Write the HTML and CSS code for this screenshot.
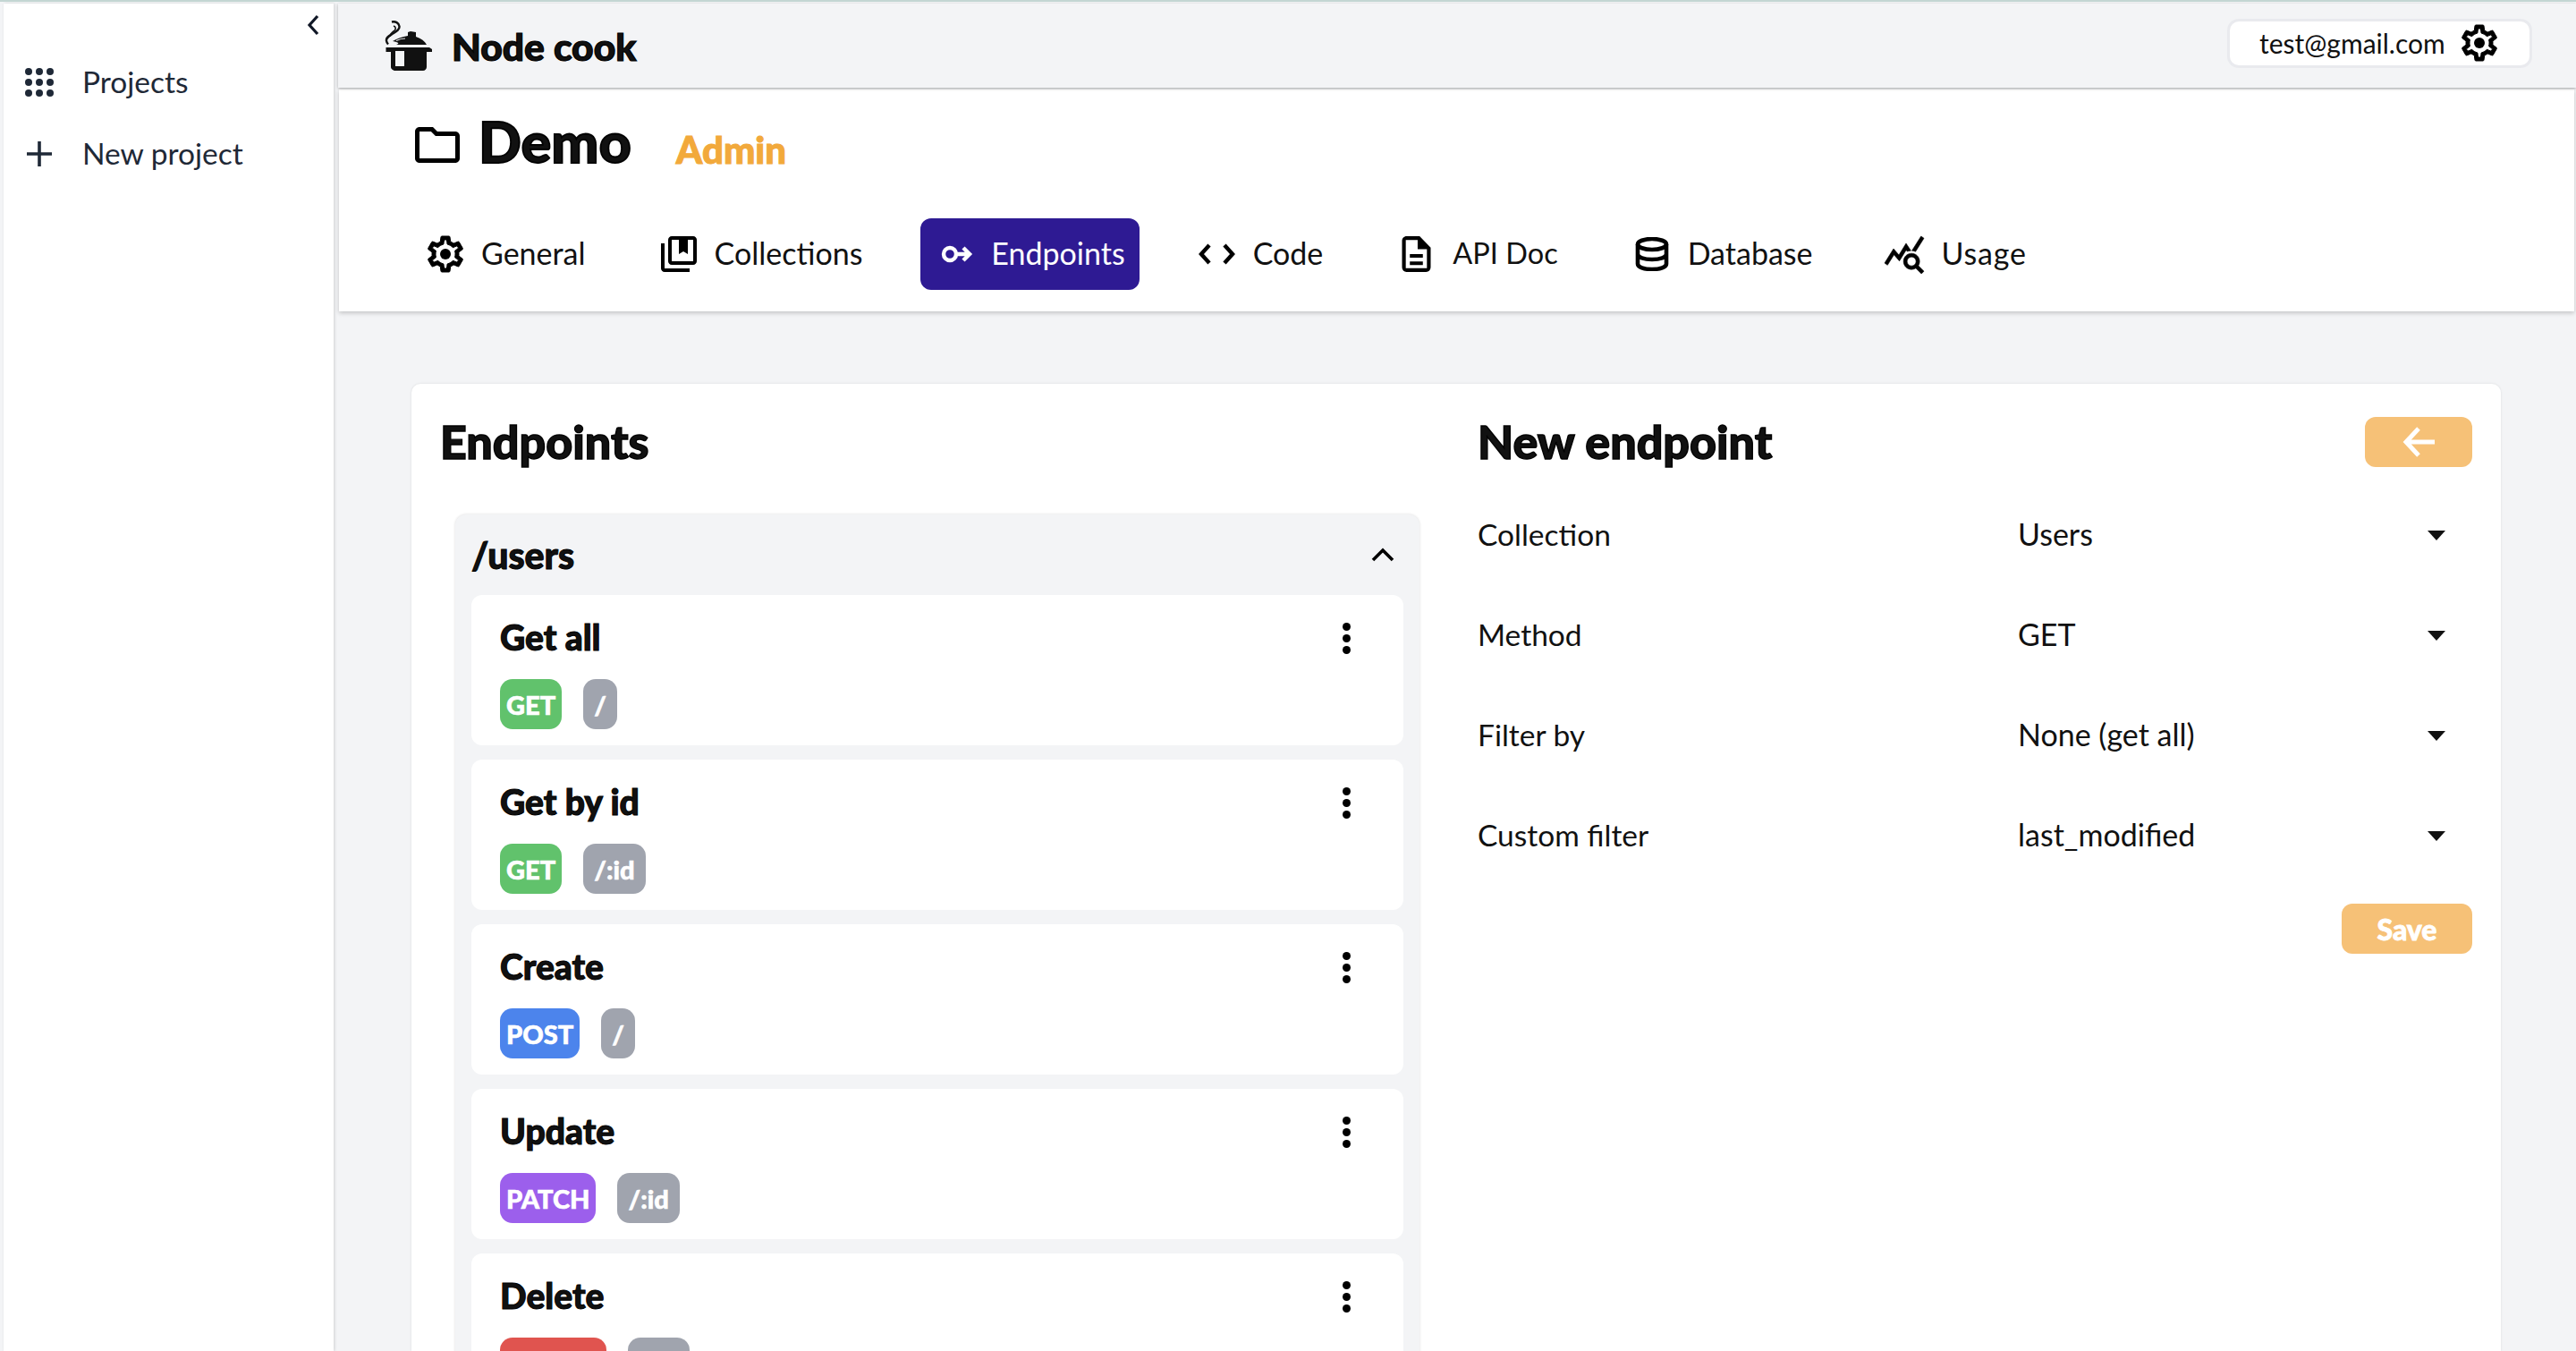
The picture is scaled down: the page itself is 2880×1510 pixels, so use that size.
FILE: index.html
```html
<!DOCTYPE html>
<html lang="en">
<head>
    <meta charset="UTF-8">
    <title>Node cook</title>
    <link rel="stylesheet" href="styles.css">
</head>
<body>
    <svg class="icon-defs" xmlns="http://www.w3.org/2000/svg">
        <symbol id="i-gear" viewBox="0 0 24 24">
            <path d="M19.43 12.98c.04-.32.07-.64.07-.98 0-.34-.03-.66-.07-.98l2.11-1.65c.19-.15.24-.42.12-.64l-2-3.46c-.09-.16-.26-.25-.44-.25-.06 0-.12.01-.17.03l-2.49 1c-.52-.4-1.08-.73-1.69-.98l-.38-2.65C14.46 2.18 14.25 2 14 2h-4c-.25 0-.46.18-.49.42l-.38 2.65c-.61.25-1.17.59-1.69.98l-2.49-1c-.06-.02-.12-.03-.18-.03-.17 0-.34.09-.43.25l-2 3.46c-.13.22-.07.49.12.64l2.11 1.65c-.04.32-.07.65-.07.98 0 .33.03.66.07.98l-2.11 1.65c-.19.15-.24.42-.12.64l2 3.46c.09.16.26.25.44.25.06 0 .12-.01.17-.03l2.49-1c.52.4 1.08.73 1.69.98l.38 2.65c.03.24.24.42.49.42h4c.25 0 .46-.18.49-.42l.38-2.65c.61-.25 1.17-.59 1.69-.98l2.49 1c.06.02.12.03.18.03.17 0 .34-.09.43-.25l2-3.46c.12-.22.07-.49-.12-.64l-2.11-1.65zm-1.98-1.71c.04.31.05.52.05.73 0 .21-.02.43-.05.73l-.14 1.13.89.7 1.08.84-.7 1.21-1.27-.51-1.04-.42-.9.68c-.43.32-.84.56-1.25.73l-1.06.43-.16 1.13-.2 1.35h-1.4l-.19-1.35-.16-1.13-1.06-.43c-.43-.18-.83-.41-1.23-.71l-.91-.7-1.06.43-1.27.51-.7-1.21 1.08-.84.89-.7-.14-1.13c-.03-.31-.05-.54-.05-.74s.02-.43.05-.73l.14-1.13-.89-.7-1.08-.84.7-1.21 1.27.51 1.04.42.9-.68c.43-.32.84-.56 1.25-.73l1.06-.43.16-1.13.2-1.35h1.39l.19 1.35.16 1.13 1.06.43c.43.18.83.41 1.23.71l.91.7 1.06-.43 1.27-.51.7 1.21-1.07.85-.89.7.14 1.13z" stroke="#000" stroke-width=".5"/>
            <circle cx="12" cy="12" r="3"/>
        </symbol>
        <symbol id="i-book" viewBox="0 0 24 24">
            <path d="M4 6H2v14c0 1.1.9 2 2 2h14v-2H4V6zm16-4H8c-1.1 0-2 .9-2 2v12c0 1.1.9 2 2 2h12c1.1 0 2-.9 2-2V4c0-1.1-.9-2-2-2zm0 14H8V4h4v8l2.5-1.5L17 12V4h3v12z"/>
        </symbol>
        <symbol id="i-file" viewBox="0 0 18 22">
            <path d="M5 15.5h8v2.2H5zm0-4.5h8v2.2H5zM11 0H3C1.4 0 .2 1.3.2 3v16c0 1.7 1.2 3 2.8 3h12c1.600 0 2.800-1.300 2.800-3V7l-6.800-7zm4.500 19.700H2.500V2.300h7.300V8h5.700v11.700z"/>
        </symbol>
        <symbol id="i-usage" viewBox="0 0 24 24">
            <path d="M19.880 18.470c.44-.7.7-1.510.7-2.390 0-2.490-2.010-4.500-4.500-4.500s-4.500 2.010-4.500 4.500 2.010 4.500 4.490 4.500c.88 0 1.700-.26 2.390-.7L21.580 23 23 21.580l-3.120-3.110zm-3.800.11c-1.380 0-2.500-1.120-2.500-2.500s1.120-2.500 2.500-2.500 2.500 1.120 2.500 2.500-1.120 2.500-2.500 2.500zm-.36-8.500c-.74.02-1.450.18-2.100.45l-.55-.83-3.800 6.180-3.010-3.520-3.630 5.810L1 17l5-8 3 3.500L13 6l2.720 4.080zm2.590.5c-.64-.28-1.330-.45-2.050-.49L21.380 2 23 3.180l-4.690 7.400z" stroke="#000" stroke-width=".3"/>
        </symbol>
    </svg>

    <div class="app">
        <aside class="sidebar">
            <div class="collapse">
                <svg class="collapse-icon" viewBox="0 0 14 24"><path d="M12 2 3 12l9 10" fill="none" stroke="#111827" stroke-width="3.200"/></svg>
            </div>
            <a class="side-link">
                <svg class="side-icon" viewBox="0 0 32 32" fill="#1f2937">
                    <circle cx="4" cy="4" r="4"/><circle cx="16" cy="4" r="4"/><circle cx="28" cy="4" r="4"/>
                    <circle cx="4" cy="16" r="4"/><circle cx="16" cy="16" r="4"/><circle cx="28" cy="16" r="4"/>
                    <circle cx="4" cy="28" r="4"/><circle cx="16" cy="28" r="4"/><circle cx="28" cy="28" r="4"/>
                </svg>
                <span class="side-text">Projects</span>
            </a>
            <a class="side-link">
                <svg class="side-icon" viewBox="0 0 32 32"><path d="M16 2v28M2 16h28" stroke="#1f2937" stroke-width="3.600" fill="none"/></svg>
                <span class="side-text">New project</span>
            </a>
        </aside>

        <div class="main">
            <header class="topbar">
                <div class="brand">
                    <svg class="brand-icon" viewBox="0 0 56 56">
                        <path d="M10 1.500c4-1 8 1 8.500 5 .5 4-4 6-8 8.500-4 2.500-7 4-6.500 7.500.2 1.500 1 3 2 4" fill="none" stroke="#111" stroke-width="2.400"/>
                        <path d="M12 6c3 1 3 4 0 6-2 1.500-4 3-4 6" fill="none" stroke="#111" stroke-width="1.600"/>
                        <path d="M11 23c5-3 11-5 17-6v-4l3-1 6 1v5c6 2 10 5 12 9H15c4-1 3-3-4-4z" fill="#111"/>
                        <path d="M15 22.500c3-1.500 7-2.500 10-2.500" fill="none" stroke="#f3f4f6" stroke-width="1.200"/>
                        <path d="M3.500 30H52l3 2v3h-6v17c0 2.200-1.800 4-4 4H14c-2.200 0-5-1.800-5-4V35H3.500z" fill="#111"/>
                        <path d="M14 34h10v17H14z" fill="#f3f4f6"/>
                    </svg>
                    <span class="brand-name">Node cook</span>
                </div>
                <div class="account">
                    <span>test@gmail.com</span>
                    <svg class="gear"><use href="#i-gear"/></svg>
                </div>
            </header>

            <section class="project">
                <div class="project-title">
                    <svg class="folder" viewBox="2 4 20 16"><path d="M9.170 6l2 2H20v10H4V6h5.170M10 4H4c-1.100 0-1.990.9-1.990 2L2 18c0 1.100.9 2 2 2h16c1.100 0 2-.9 2-2V8c0-1.100-.9-2-2-2h-8l-2-2z"/></svg>
                    <h1>Demo</h1>
                    <span class="role">Admin</span>
                </div>
                <nav class="tabs">
                    <a class="tab tab-general"><svg class="tab-icon"><use href="#i-gear"/></svg><span>General</span></a>
                    <a class="tab tab-collections"><svg class="tab-icon"><use href="#i-book"/></svg><span>Collections</span></a>
                    <a class="tab tab-active">
                        <svg class="tab-icon tab-icon-key" viewBox="0 0 36 24" fill="none" stroke="#fff" stroke-width="4.400"><circle cx="10" cy="12" r="7"/><path d="M17 12h16M25 5l7 7-7 7"/></svg>
                        <span>Endpoints</span>
                    </a>
                    <a class="tab tab-code">
                        <svg class="tab-icon" viewBox="0 0 41 24" fill="none" stroke="#000" stroke-width="4.400"><path d="M12 2 3 12l9 10M29 2l9 10-9 10"/></svg>
                        <span>Code</span>
                    </a>
                    <a class="tab tab-doc"><svg class="tab-icon tab-icon-file"><use href="#i-file"/></svg><span>API Doc</span></a>
                    <a class="tab tab-db">
                        <svg class="tab-icon tab-icon-db" viewBox="0 0 38 38" fill="none" stroke="#000" stroke-width="4.600">
                            <ellipse cx="19" cy="8" rx="16" ry="6"/>
                            <path d="M3 8v22c0 3.500 7 6 16 6s16-2.500 16-6V8M3 19c0 3.500 7 6 16 6s16-2.500 16-6"/>
                        </svg>
                        <span>Database</span>
                    </a>
                    <a class="tab tab-usage"><svg class="tab-icon tab-icon-usage"><use href="#i-usage"/></svg><span>Usage</span></a>
                </nav>
            </section>

            <div class="content">
                <div class="card">
                    <div class="col-list">
                        <h2 class="card-title">Endpoints</h2>
                        <div class="accordion">
                            <div class="accordion-head">
                                <span>/users</span>
                                <svg class="chev-up" viewBox="0 0 26 16"><path d="M2 14 13 3l11 11" fill="none" stroke="#000" stroke-width="3.600"/></svg>
                            </div>
                            <div class="endpoint-list">
                                <div class="endpoint">
                                    <div class="endpoint-top"><span>Get all</span><span class="dots"><i></i><i></i><i></i></span></div>
                                    <div class="badges"><span class="badge badge-get">GET</span><span class="badge badge-path">/</span></div>
                                </div>
                                <div class="endpoint">
                                    <div class="endpoint-top"><span>Get by id</span><span class="dots"><i></i><i></i><i></i></span></div>
                                    <div class="badges"><span class="badge badge-get">GET</span><span class="badge badge-path">/:id</span></div>
                                </div>
                                <div class="endpoint">
                                    <div class="endpoint-top"><span>Create</span><span class="dots"><i></i><i></i><i></i></span></div>
                                    <div class="badges"><span class="badge badge-post">POST</span><span class="badge badge-path">/</span></div>
                                </div>
                                <div class="endpoint">
                                    <div class="endpoint-top"><span>Update</span><span class="dots"><i></i><i></i><i></i></span></div>
                                    <div class="badges"><span class="badge badge-patch">PATCH</span><span class="badge badge-path">/:id</span></div>
                                </div>
                                <div class="endpoint">
                                    <div class="endpoint-top"><span>Delete</span><span class="dots"><i></i><i></i><i></i></span></div>
                                    <div class="badges"><span class="badge badge-delete">DELETE</span><span class="badge badge-path">/:id</span></div>
                                </div>
                            </div>
                        </div>
                    </div>

                    <div class="col-form">
                        <div class="form-head">
                            <h2 class="card-title">New endpoint</h2>
                            <button class="btn btn-back">
                                <svg class="back-icon" viewBox="0 0 38 36" fill="none" stroke="#fff" stroke-width="5"><path d="M37 18H5M19 3 5 18l14 15"/></svg>
                            </button>
                        </div>
                        <div class="field"><span class="field-label">Collection</span><div class="select"><span>Users</span><i class="caret"></i></div></div>
                        <div class="field"><span class="field-label">Method</span><div class="select"><span>GET</span><i class="caret"></i></div></div>
                        <div class="field"><span class="field-label">Filter by</span><div class="select"><span>None (get all)</span><i class="caret"></i></div></div>
                        <div class="field"><span class="field-label">Custom filter</span><div class="select"><span>last_modified</span><i class="caret"></i></div></div>
                        <div class="form-foot"><button class="btn btn-save">Save</button></div>
                    </div>
                </div>
            </div>
        </div>
    </div>
</body>
</html>
```

FILE: styles.css
```css
* {
    box-sizing: border-box;
}

body {
    margin: 0;
    height: 1510px;
    overflow: hidden;
    font-family: Lato, "Open Sans", sans-serif;
    font-size: 34px;
    color: #111;
    background-color: #f3f4f6;
    border-top: 2px solid #c3d6d3;
}

.icon-defs {
    display: none;
}

.app {
    display: flex;
    height: 1508px;
    padding-top: 2px;
}

/* sidebar */
.sidebar {
    width: 369px;
    margin-left: 4px;
    margin-right: 5px;
    background-color: #fff;
    box-shadow: 1px 0 3px rgba(0, 0, 0, 0.15);
    flex-shrink: 0;
}

.collapse {
    display: flex;
    justify-content: flex-end;
    height: 48px;
    padding: 12px 16px 0 0;
}

.collapse-icon {
    width: 14px;
    height: 24px;
}

.side-link {
    display: flex;
    align-items: center;
    gap: 32px;
    height: 80px;
    padding-left: 24px;
    color: #1f2937;
}

.side-text {
    font-size: 33.500px;
    margin-top: -3px;
}

.side-icon {
    width: 32px;
    height: 32px;
}

/* top bar */
.main {
    flex: 1;
    min-width: 0;
    display: flex;
    flex-direction: column;
}

.topbar {
    display: flex;
    align-items: center;
    justify-content: space-between;
    height: 94px;
    padding: 0 52px 0 50px;
    background-color: #f3f4f6;
    box-shadow: 0 1px 3px rgba(0, 0, 0, 0.3);
    position: relative;
}

.brand {
    display: flex;
    align-items: center;
    gap: 21px;
}

.brand-icon {
    width: 56px;
    height: 56px;
}

.brand-name {
    font-size: 42.500px;
    font-weight: 900;
    -webkit-text-stroke: 1.200px #000;
}

.account {
    display: flex;
    align-items: center;
    justify-content: space-between;
    width: 335px;
    height: 49px;
    margin-top: -6px;
    padding: 0 36px 0 33px;
    background-color: #fff;
    border-radius: 10px;
    box-shadow: 0 0 0 3px #e9eaee;
    font-size: 30px;
    color: #111;
}

.gear {
    width: 48px;
    height: 48px;
    margin-right: -4px;
}

/* project panel */
.project {
    height: 248px;
    margin: 2px 2px 0 1px;
    padding: 34px 0 0 76px;
    background-color: #fff;
    box-shadow: 0 2px 5px rgba(0, 0, 0, 0.2);
}

.project-title {
    display: flex;
    align-items: center;
    height: 56px;
    padding-left: 9px;
}

.folder {
    width: 50px;
    height: 40px;
}

.project-title h1 {
    margin: -8px 50px 0 21px;
    font-size: 63px;
    font-weight: 900;
    line-height: 56px;
    -webkit-text-stroke: 1.800px #000;
}

.role {
    margin-top: 10px;
    font-size: 42px;
    font-weight: 900;
    color: #f2a93b;
    -webkit-text-stroke: 1px #f2a93b;
}

.tabs {
    display: flex;
    gap: 45px;
    margin-top: 54px;
}

.tab {
    display: flex;
    align-items: center;
    gap: 20px;
    height: 80px;
    padding: 0 16px 0 23px;
    border-radius: 12px;
    white-space: nowrap;
}

.tab span {
    margin-top: -3px;
}

.tab-active {
    margin-left: 4px;
    background-color: #2e1a93;
    color: #fff;
}

.tab-code {
    margin-left: -2px;
}

.tab-doc {
    margin-left: 4px;
    gap: 24px;
}

.tab-doc span {
    font-size: 32.500px;
}

.tab-db {
    margin-left: 2px;
    gap: 21px;
}

.tab-usage {
    margin-left: -4px;
}

.tab-usage span {
    letter-spacing: 0.800px;
}

.tab-icon {
    width: 48px;
    height: 48px;
    margin: 0 -4px;
}

.tab-icon-key {
    width: 36px;
    height: 24px;
    margin: 0;
}

.tab-code .tab-icon {
    width: 41px;
    height: 24px;
    margin: 0;
}

.tab-icon-file {
    width: 33px;
    height: 40px;
    margin: 0;
}

.tab-icon-db {
    width: 38px;
    height: 38px;
    margin: 0;
}

.tab-icon-usage {
    width: 48px;
    height: 48px;
    margin: 0 -2px;
}

/* main card */
.content {
    flex: 1;
    min-height: 0;
    padding: 81px 84px 0 82px;
}

.card {
    display: grid;
    grid-template-columns: 1094px 1111px;
    column-gap: 66px;
    height: 100%;
    padding: 37px 32px 0 33px;
    background-color: #fff;
    border-radius: 10px 10px 0 0;
    box-shadow: 0 0 3px rgba(0, 0, 0, 0.1);
    overflow: hidden;
}

.card-title {
    margin: -1px 0 1px -1px;
    font-size: 52px;
    font-weight: 900;
    line-height: 56px;
    -webkit-text-stroke: 1.400px #000;
}

.accordion {
    margin: 54px 0 0 16px;
    padding: 0 18px;
    background-color: #f3f4f6;
    border-radius: 12px 12px 0 0;
    box-shadow: 0 0 3px rgba(0, 0, 0, 0.15);
}

.accordion-head {
    display: flex;
    align-items: center;
    justify-content: space-between;
    height: 90px;
    font-size: 41px;
    font-weight: 900;
    padding-right: 10px;
    -webkit-text-stroke: 1px #000;
}

.chev-up {
    width: 26px;
    height: 16px;
}

.endpoint-list {
    display: flex;
    flex-direction: column;
    gap: 16px;
}

.endpoint {
    height: 168px;
    padding: 24px 32px 0;
    background-color: #fff;
    border-radius: 12px;
}

.endpoint-top {
    display: flex;
    align-items: center;
    justify-content: space-between;
    height: 48px;
    font-size: 39px;
    font-weight: 900;
    padding-right: 27px;
    -webkit-text-stroke: 1px #000;
}

.endpoint-top > span:first-child {
    margin-top: -2px;
}

.dots {
    display: flex;
    flex-direction: column;
    gap: 4px;
}

.dots i {
    display: block;
    width: 9px;
    height: 9px;
    border-radius: 50%;
    background-color: #000;
}

.badges {
    display: flex;
    gap: 24px;
    margin-top: 22px;
}

.badge {
    display: flex;
    align-items: center;
    height: 56px;
    padding: 0 7px;
    border-radius: 14px;
    color: #fff;
    font-size: 29px;
    font-weight: 900;
    -webkit-text-stroke: 0.600px #fff;
}

.badge-get {
    background-color: #61c26c;
}

.badge-post {
    background-color: #4c84ec;
}

.badge-patch {
    background-color: #9c5fec;
}

.badge-delete {
    background-color: #e0544f;
}

.badge-path {
    padding: 0 12px;
    background-color: #a0a4ae;
}

/* form */
.form-head {
    display: flex;
    align-items: center;
    justify-content: space-between;
}

.btn {
    border: none;
    border-radius: 12px;
    background-color: #f6c177;
    color: #fff;
    font-family: inherit;
    font-weight: 900;
    font-size: 32px;
    height: 56px;
    padding: 0;
    -webkit-text-stroke: 0.800px #fff;
}

.btn-back {
    display: flex;
    align-items: center;
    justify-content: center;
    width: 120px;
}

.back-icon {
    width: 38px;
    height: 36px;
}

.btn-save {
    width: 146px;
}

.field {
    display: grid;
    grid-template-columns: 603px 1fr;
    align-items: center;
    height: 56px;
    margin-top: 56px;
}

.form-head + .field {
    margin-top: 48px;
}

.field span {
    margin-top: -3px;
}

.field-label {
    margin-left: -1px;
    font-size: 33.500px;
}

.select {
    display: flex;
    align-items: center;
    justify-content: space-between;
    padding-right: 30px;
}

.caret {
    width: 0;
    height: 0;
    border-left: 10px solid transparent;
    border-right: 10px solid transparent;
    border-top: 11px solid #111;
}

.form-foot {
    display: flex;
    justify-content: flex-end;
    margin-top: 48px;
}
```
